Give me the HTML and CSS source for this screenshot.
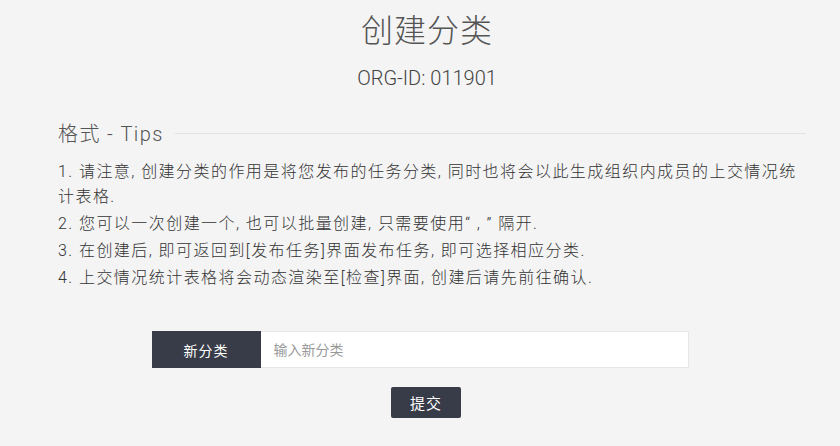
FILE: index.html
```html
<!DOCTYPE html>
<html lang="zh-CN">
<head>
<meta charset="utf-8">
<title>创建分类</title>
<link rel="stylesheet" href="styles.css">
</head>
<body>
<div class="page">
  <header class="head">
    <h1 class="title">创建分类</h1>
    <div class="org">ORG-ID: 011901</div>
  </header>
  <section class="tips">
    <div class="tips-head">
      <span class="tips-title">格式 - Tips</span>
      <span class="tips-line"></span>
    </div>
    <ol class="tips-list">
      <li>1. 请注意, 创建分类的作用是将您发布的任务分类, 同时也将会以此生成组织内成员的上交情况统计表格.</li>
      <li>2. 您可以一次创建一个, 也可以批量创建, 只需要使用“ , ” 隔开.</li>
      <li>3. 在创建后, 即可返回到[发布任务]界面发布任务, 即可选择相应分类.</li>
      <li>4. 上交情况统计表格将会动态渲染至[检查]界面, 创建后请先前往确认.</li>
    </ol>
  </section>
  <form class="form">
    <div class="group">
      <span class="group-label">新分类</span>
      <input class="group-input" type="text" placeholder="输入新分类">
    </div>
    <button class="submit" type="button">提交</button>
  </form>
</div>
</body>
</html>
```
FILE: styles.css
```css
* { box-sizing: border-box; }
html, body { margin: 0; padding: 0; }
body {
  background: #f4f4f4;
  font-family: Roboto, "Noto Sans CJK SC", sans-serif;
  color: #333;
  width: 840px;
  height: 446px;
  overflow: hidden;
}
.page {
  padding: 0 34px 0 58px;
}
.head {
  text-align: center;
  margin-right: 10px;
}
.title {
  margin: 0;
  padding-top: 10px;
  font-size: 32px;
  font-weight: 300;
  line-height: 42px;
  color: #555;
  letter-spacing: 1px;
}
.org {
  margin-top: 13px;
  font-size: 20px;
  font-weight: 300;
  line-height: 26px;
  color: #444;
}
.tips { margin-top: 29px; }
.tips-head {
  display: flex;
  align-items: center;
  gap: 11px;
}
.tips-title {
  font-size: 20px;
  font-weight: 300;
  line-height: 28px;
  color: #555;
  letter-spacing: 1.4px;
}
.tips-line {
  flex: 1;
  height: 1px;
  background: #e2e2e2;
  margin-top: -2px;
}
.tips-list {
  list-style: none;
  margin: 11px 0 0;
  padding: 0;
  width: 748px;
  font-size: 16px;
  font-weight: 300;
  line-height: 25px;
  color: #333;
  letter-spacing: 1.45px;
}
.tips-list li { margin-bottom: 2px; }
.form {
  margin-top: 40px;
  display: flex;
  flex-direction: column;
  align-items: center;
  margin-left: -58px;
  margin-right: -34px;
}
.group {
  display: flex;
  width: 537px;
  height: 37px;
  margin-top: 1px;
}
.group-label {
  width: 109px;
  background: #383b48;
  color: #fff;
  font-size: 14px;
  display: flex;
  align-items: center;
  justify-content: center;
  letter-spacing: 1px;
}
.group-input {
  flex: 1;
  border: 1px solid #e6e6e6;
  border-left: 0;
  background: #fff;
  padding: 0 13px;
  font-family: inherit;
  font-size: 14px;
  outline: none;
}
.group-input::placeholder { color: #999; }
.submit {
  margin-top: 19px;
  margin-left: 12px;
  width: 70px;
  height: 31px;
  border: 0;
  border-radius: 2px;
  background: #383b48;
  color: #fff;
  font-family: inherit;
  font-size: 15px;
  letter-spacing: 1px;
}
```
